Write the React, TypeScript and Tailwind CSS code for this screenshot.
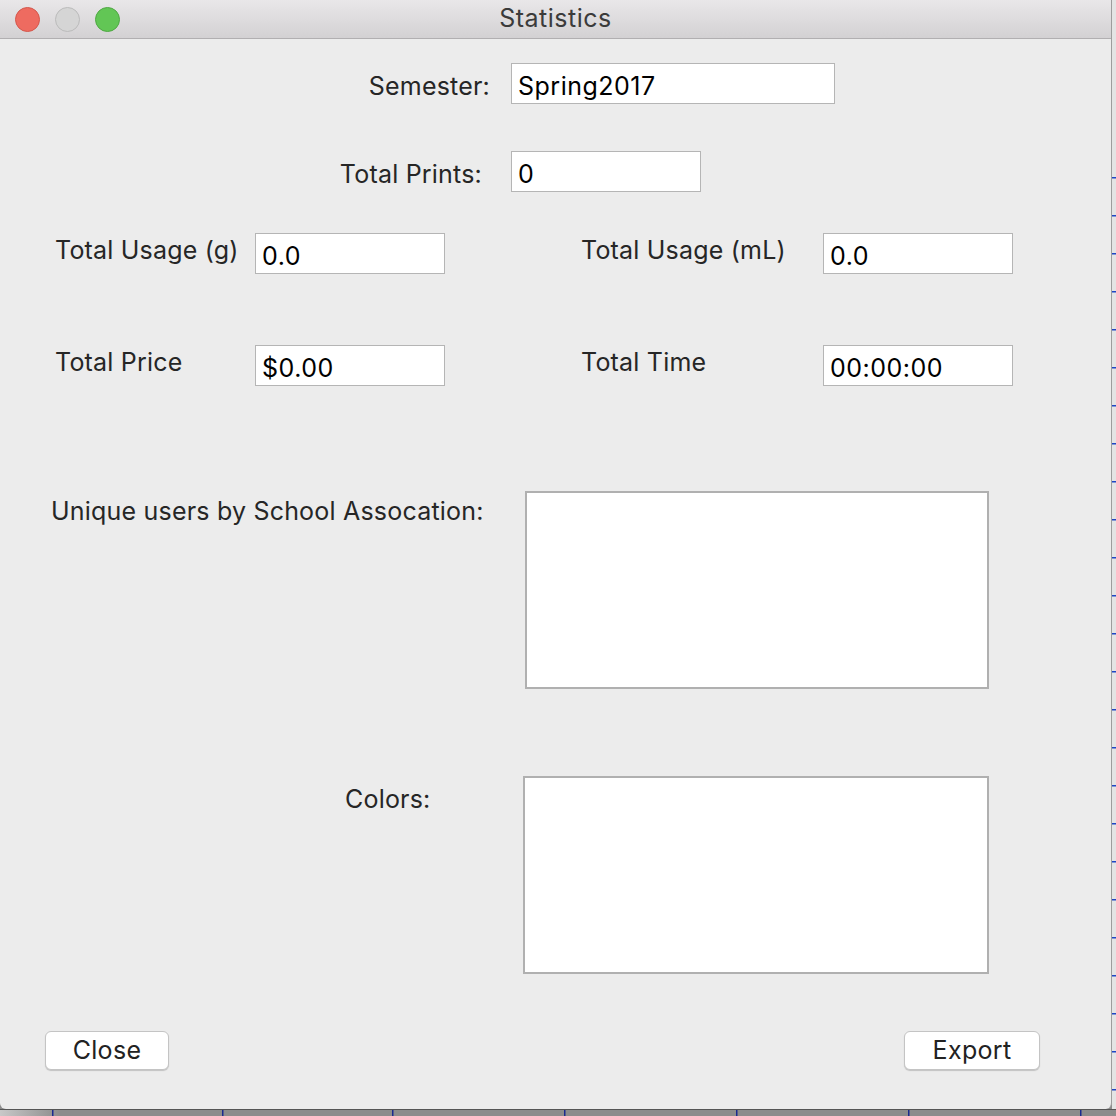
const tickYs = Array.from({ length: 25 }, (_, i) => 177 + i * 38)
const tickXs = [52, 222, 392, 564, 736, 908, 1080]

function Field({ value, w }: { value: string; w: string }) {
  return (
    <div className={`${w} h-[41px] shrink-0 border border-[#b5b5b5] bg-white pl-[6px] pt-[5px] text-[25px] tracking-[0.5px] leading-[34px] text-black`}>
      {value}
    </div>
  )
}

function Button({ label, w }: { label: string; w: string }) {
  return (
    <div className={`${w} h-[39px] flex items-center justify-center rounded-[6px] border border-[#c4c4c4] bg-white text-[25px] tracking-[0.3px] text-[#222] shadow-[0_1px_1px_rgba(0,0,0,0.18)]`}>
      {label}
    </div>
  )
}

export default function App() {
  return (
    <div className="w-[1116px] h-[1116px] flex flex-col bg-[#8c8c8c] font-['Inter','Open_Sans',sans-serif] text-[#262626] overflow-hidden">
      <div className="flex h-[1109px]">
        {/* window */}
        <div className="w-[1112px] h-[1109px] flex flex-col bg-[#ececec] rounded-b-[6px] border-r border-[#9d9d9d]">
          <div className="h-[39px] shrink-0 flex items-center border-b border-[#b1afb1] bg-gradient-to-b from-[#e9e7e9] to-[#d3d1d3] relative">
            <div className="flex gap-[15px] pl-[15px]">
              <div className="w-[25px] h-[25px] rounded-full bg-[#ee6b60] border border-[#d4574c]" />
              <div className="w-[25px] h-[25px] rounded-full bg-[#d5d5d5] border border-[#bbbbbb]" />
              <div className="w-[25px] h-[25px] rounded-full bg-[#62c655] border border-[#4fa843]" />
            </div>
            <div className="absolute inset-0 flex items-center justify-center text-[25px] tracking-[0.5px] text-[#3b3b3b]">Statistics</div>
          </div>

          <div className="flex flex-col text-[25px] tracking-[0.2px]">
            {/* semester */}
            <div className="flex items-center mt-[24px] h-[41px]">
              <div className="w-[490px] text-right pt-[6px]">Semester:</div>
              <div className="ml-[21px]"><Field value="Spring2017" w="w-[324px]" /></div>
            </div>

            {/* prints */}
            <div className="flex items-center mt-[47px] h-[41px]">
              <div className="w-[482px] text-right pt-[7px]">Total Prints:</div>
              <div className="ml-[29px]"><Field value="0" w="w-[190px]" /></div>
            </div>

            {/* usage */}
            <div className="flex items-center mt-[41px] h-[41px]">
              <div className="w-[255px] pl-[55px] pb-[6px]">Total Usage (g)</div>
              <Field value="0.0" w="w-[190px]" />
              <div className="w-[242px] ml-[136px] pb-[6px]">Total Usage (mL)</div>
              <Field value="0.0" w="w-[190px]" />
            </div>

            {/* price / time */}
            <div className="flex items-center mt-[71px] h-[41px]">
              <div className="w-[255px] pl-[55px] pb-[6px]">Total Price</div>
              <Field value="$0.00" w="w-[190px]" />
              <div className="w-[242px] ml-[136px] pb-[6px]">Total Time</div>
              <Field value="00:00:00" w="w-[190px]" />
            </div>

            {/* unique users */}
            <div className="flex mt-[105px]">
              <div className="w-[525px] pl-[51px] pt-[2px]">Unique users by School Assocation:</div>
              <div className="w-[464px] h-[198px] border-2 border-[#b0b0b0] bg-white" />
            </div>

            {/* colors */}
            <div className="flex mt-[87px]">
              <div className="w-[523px] pl-[345px] pt-[5px]">Colors:</div>
              <div className="w-[466px] h-[198px] border-2 border-[#b0b0b0] bg-white" />
            </div>

            {/* buttons */}
            <div className="flex justify-between mt-[57px] pl-[45px] pr-[71px]">
              <Button label="Close" w="w-[124px]" />
              <Button label="Export" w="w-[136px]" />
            </div>
          </div>
        </div>

        {/* desktop strip on the right */}
        <svg width="4" height="1109" className="bg-[#e4e4e4]">
          {tickYs.map((y) => (
            <rect key={y} x="0" y={y} width="4" height="1.5" fill="#1f45c4" />
          ))}
        </svg>
      </div>

      {/* desktop strip below */}
      <svg width="1116" height="7" className="border-t border-[#555]">
        <defs>
          <linearGradient id="fade" x1="0" x2="1">
            <stop offset="0" stopColor="#c8c8c8" />
            <stop offset="1" stopColor="#8c8c8c" />
          </linearGradient>
        </defs>
        <rect x="0" y="0" width="60" height="7" fill="url(#fade)" />
        {tickXs.map((x) => (
          <rect key={x} x={x} y="0" width="1.5" height="7" fill="#1b2a8f" />
        ))}
      </svg>
    </div>
  )
}
